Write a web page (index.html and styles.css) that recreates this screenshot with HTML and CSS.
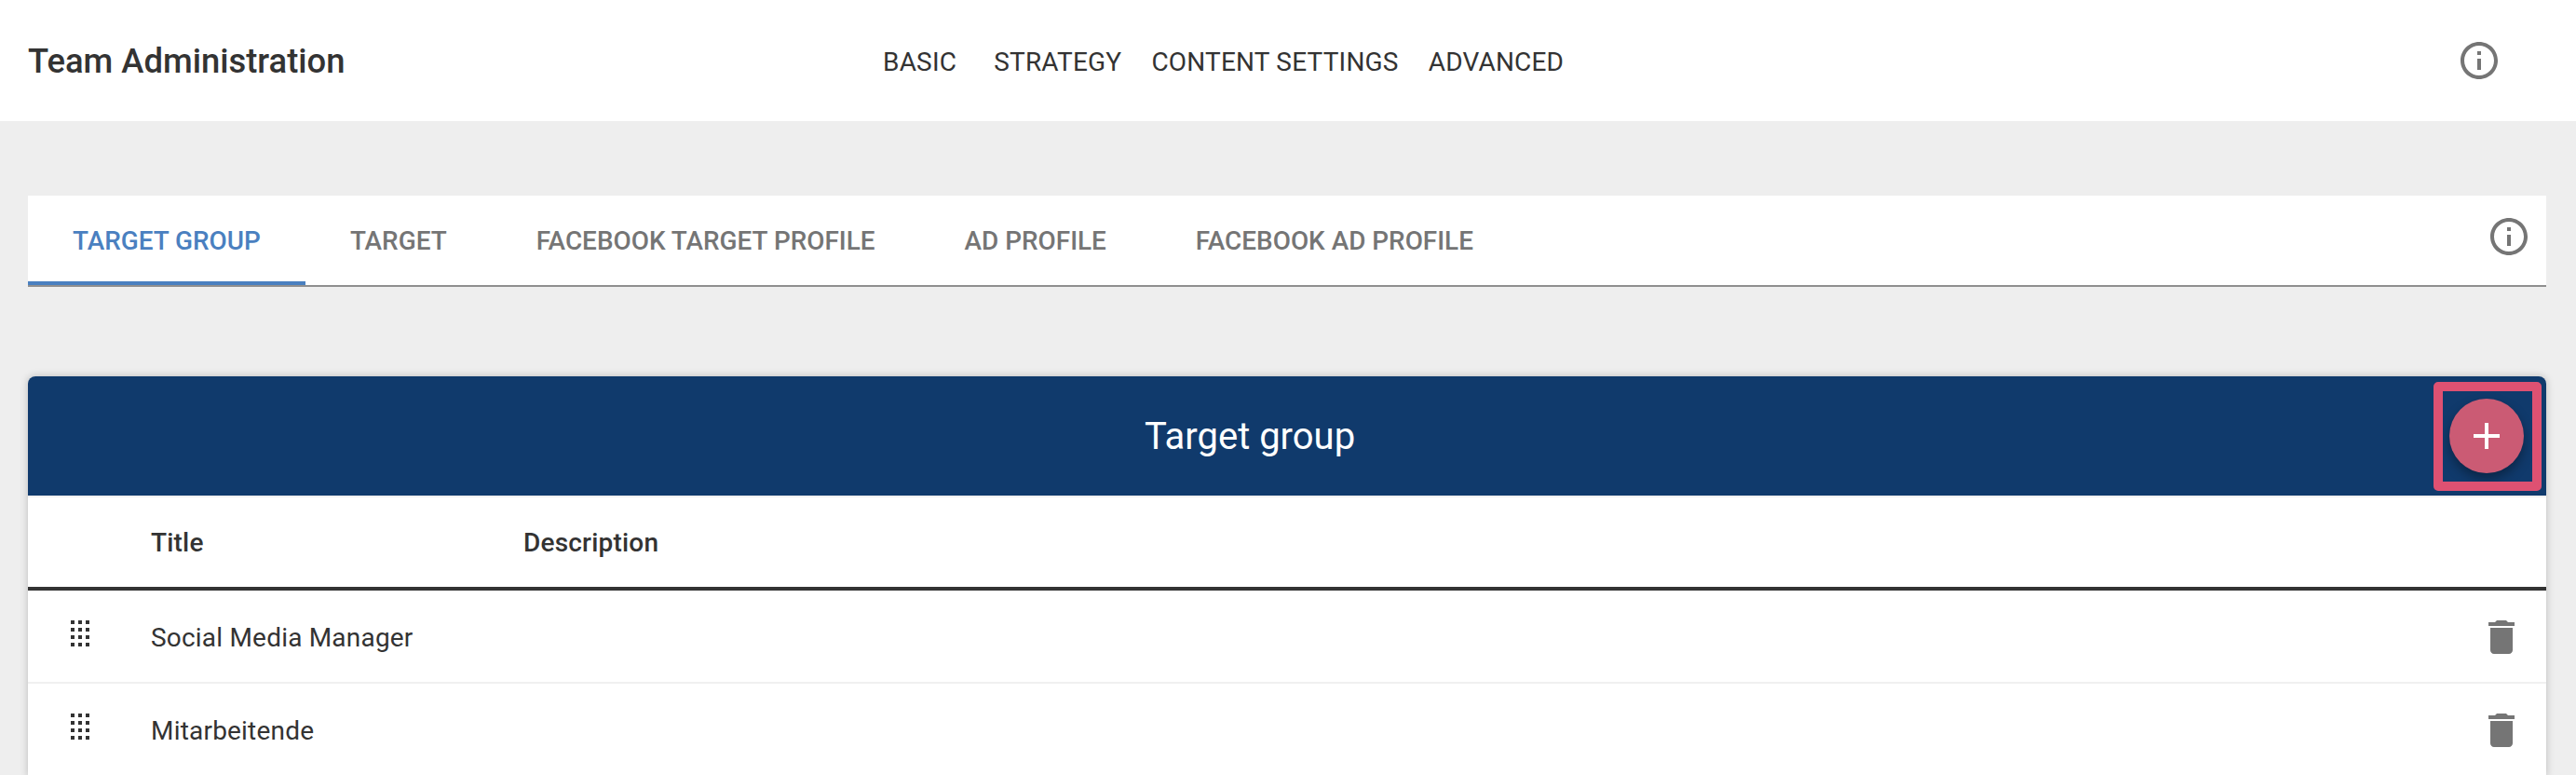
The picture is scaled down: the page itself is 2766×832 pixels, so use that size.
FILE: index.html
```html
<!DOCTYPE html>
<html lang="en">
<head>
<meta charset="utf-8">
<title>Team Administration</title>
<link rel="stylesheet" href="styles.css">
</head>
<body>
<header class="topbar">
  <h1 class="brand">Team Administration</h1>
  <nav class="mainnav">
    <a class="mainnav-item mainnav-first">BASIC</a>
    <a class="mainnav-item">STRATEGY</a>
    <a class="mainnav-item">CONTENT SETTINGS</a>
    <a class="mainnav-item">ADVANCED</a>
  </nav>
  <svg class="icon info topbar-info" viewBox="0 0 24 24"><path d="M11 7h2v2h-2zm0 4h2v6h-2zm1-9C6.48 2 2 6.48 2 12s4.48 10 10 10 10-4.48 10-10S17.52 2 12 2zm0 18c-4.41 0-8-3.59-8-8s3.59-8 8-8 8 3.59 8 8-3.59 8-8 8z"/></svg>
</header>
<main class="content">
  <div class="tabs">
    <a class="tab tab-active">TARGET GROUP</a>
    <a class="tab">TARGET</a>
    <a class="tab">FACEBOOK TARGET PROFILE</a>
    <a class="tab">AD PROFILE</a>
    <a class="tab">FACEBOOK AD PROFILE</a>
    <svg class="icon info tabs-info" viewBox="0 0 24 24"><path d="M11 7h2v2h-2zm0 4h2v6h-2zm1-9C6.48 2 2 6.48 2 12s4.48 10 10 10 10-4.48 10-10S17.52 2 12 2zm0 18c-4.41 0-8-3.59-8-8s3.59-8 8-8 8 3.59 8 8-3.59 8-8 8z"/></svg>
  </div>
  <section class="panel">
    <div class="panel-head">
      <h2 class="panel-title">Target group</h2>
      <button class="fab" type="button">
        <svg class="fab-plus" viewBox="0 0 28 28"><path d="M12 0h4v12h12v4H16v12h-4V16H0v-4h12z"/></svg>
      </button>
      <span class="highlight"></span>
    </div>
    <div class="row row-head">
      <span class="col-handle"></span>
      <span class="col-title">Title</span>
      <span class="col-desc">Description</span>
    </div>
    <div class="row row-item">
      <span class="col-handle">
        <svg class="grip" viewBox="0 0 20 28"><path d="M0 0h4v4H0zM8 0h4v4H8zM16 0h4v4h-4zM0 8h4v4H0zM8 8h4v4H8zM16 8h4v4h-4zM0 16h4v4H0zM8 16h4v4H8zM16 16h4v4h-4zM0 24h4v4H0zM8 24h4v4H8zM16 24h4v4h-4z"/></svg>
      </span>
      <span class="col-title">Social Media Manager</span>
      <svg class="icon trash" viewBox="0 0 24 24"><path d="M6 19c0 1.1.9 2 2 2h8c1.1 0 2-.9 2-2V7H6v12zM19 4h-3.5l-1-1h-5l-1 1H5v2h14V4z"/></svg>
    </div>
    <div class="row row-item">
      <span class="col-handle">
        <svg class="grip" viewBox="0 0 20 28"><path d="M0 0h4v4H0zM8 0h4v4H8zM16 0h4v4h-4zM0 8h4v4H0zM8 8h4v4H8zM16 8h4v4h-4zM0 16h4v4H0zM8 16h4v4H8zM16 16h4v4h-4zM0 24h4v4H0zM8 24h4v4H8zM16 24h4v4h-4z"/></svg>
      </span>
      <span class="col-title">Mitarbeitende</span>
      <svg class="icon trash" viewBox="0 0 24 24"><path d="M6 19c0 1.1.9 2 2 2h8c1.1 0 2-.9 2-2V7H6v12zM19 4h-3.5l-1-1h-5l-1 1H5v2h14V4z"/></svg>
    </div>
  </section>
</main>
</body>
</html>
```
FILE: styles.css
```css
* { box-sizing: border-box; }
html, body { margin: 0; height: 100%; overflow: hidden; }
body { background: #eeeeee; font-family: Roboto, "Liberation Sans", sans-serif; color: #333333; }

.icon { display: block; width: 48px; height: 48px; flex: none; fill: #757575; }

.topbar { display: flex; align-items: center; height: 130px; background: #ffffff; padding: 0 80px 0 30px; }
.brand { margin: 0; width: 340px; font-size: 36.4px; font-weight: 500; white-space: nowrap; }
.mainnav { display: flex; gap: 32px; margin-left: 578px; padding-top: 2px; }
.mainnav-item { font-size: 28px; letter-spacing: 0.2px; white-space: nowrap; }
.mainnav-first { margin-right: 8px; }
.topbar-info { margin-left: auto; }

.content { padding: 80px 32px 0 30px; }

.tabs { display: flex; height: 98px; background: #ffffff; border-bottom: 2px solid #8f8f8f; padding-right: 16px; }
.tab { display: flex; align-items: center; padding: 4px 48px 0; font-size: 27.9px; font-weight: 500; color: #757575; white-space: nowrap; border-bottom: 4px solid transparent; }
.tab-active { color: #4a80c0; border-bottom-color: #4a80c0; }
.tabs-info { margin: 20px 0 0 auto; }

.panel { margin-top: 96px; background: #ffffff; border-radius: 8px 8px 0 0; box-shadow: 0 0 8px rgba(0, 0, 0, 0.22); }
.panel-head { position: relative; display: flex; align-items: center; height: 130px; border-bottom: 2px solid #f0f0f0; background: #103a6c; border-radius: 8px 8px 0 0; color: #ffffff; }
.panel-title { flex: 1; margin: 0; padding-left: 48px; text-align: center; font-size: 40px; font-weight: 400; }
.fab { display: flex; align-items: center; justify-content: center; width: 80px; height: 80px; margin: 0 24px; padding: 0; border: 0; border-radius: 50%; background: #cb5b74; box-shadow: 0 6px 12px rgba(0, 0, 0, 0.35); }
.fab-plus { display: block; width: 28px; height: 28px; fill: #ffffff; }
.highlight { position: absolute; top: 6px; right: 5px; width: 116px; height: 117px; border: 10px solid #de5172; border-radius: 5px; }

.row { display: flex; align-items: center; font-size: 28px; letter-spacing: 0.2px; }
.row-head { height: 100px; border-bottom: 4px solid #333333; font-weight: 500; }
.row-item { height: 100px; padding: 2px 24px 0 0; border-bottom: 2px solid #f0f0f0; }
.col-handle { display: flex; width: 132px; padding-left: 46px; }
.col-title { width: 400px; white-space: nowrap; }
.col-desc { white-space: nowrap; }
.row-item .col-title { flex: 1; }
.grip { display: block; width: 20px; height: 28px; margin-top: -8px; fill: #333333; }
```
